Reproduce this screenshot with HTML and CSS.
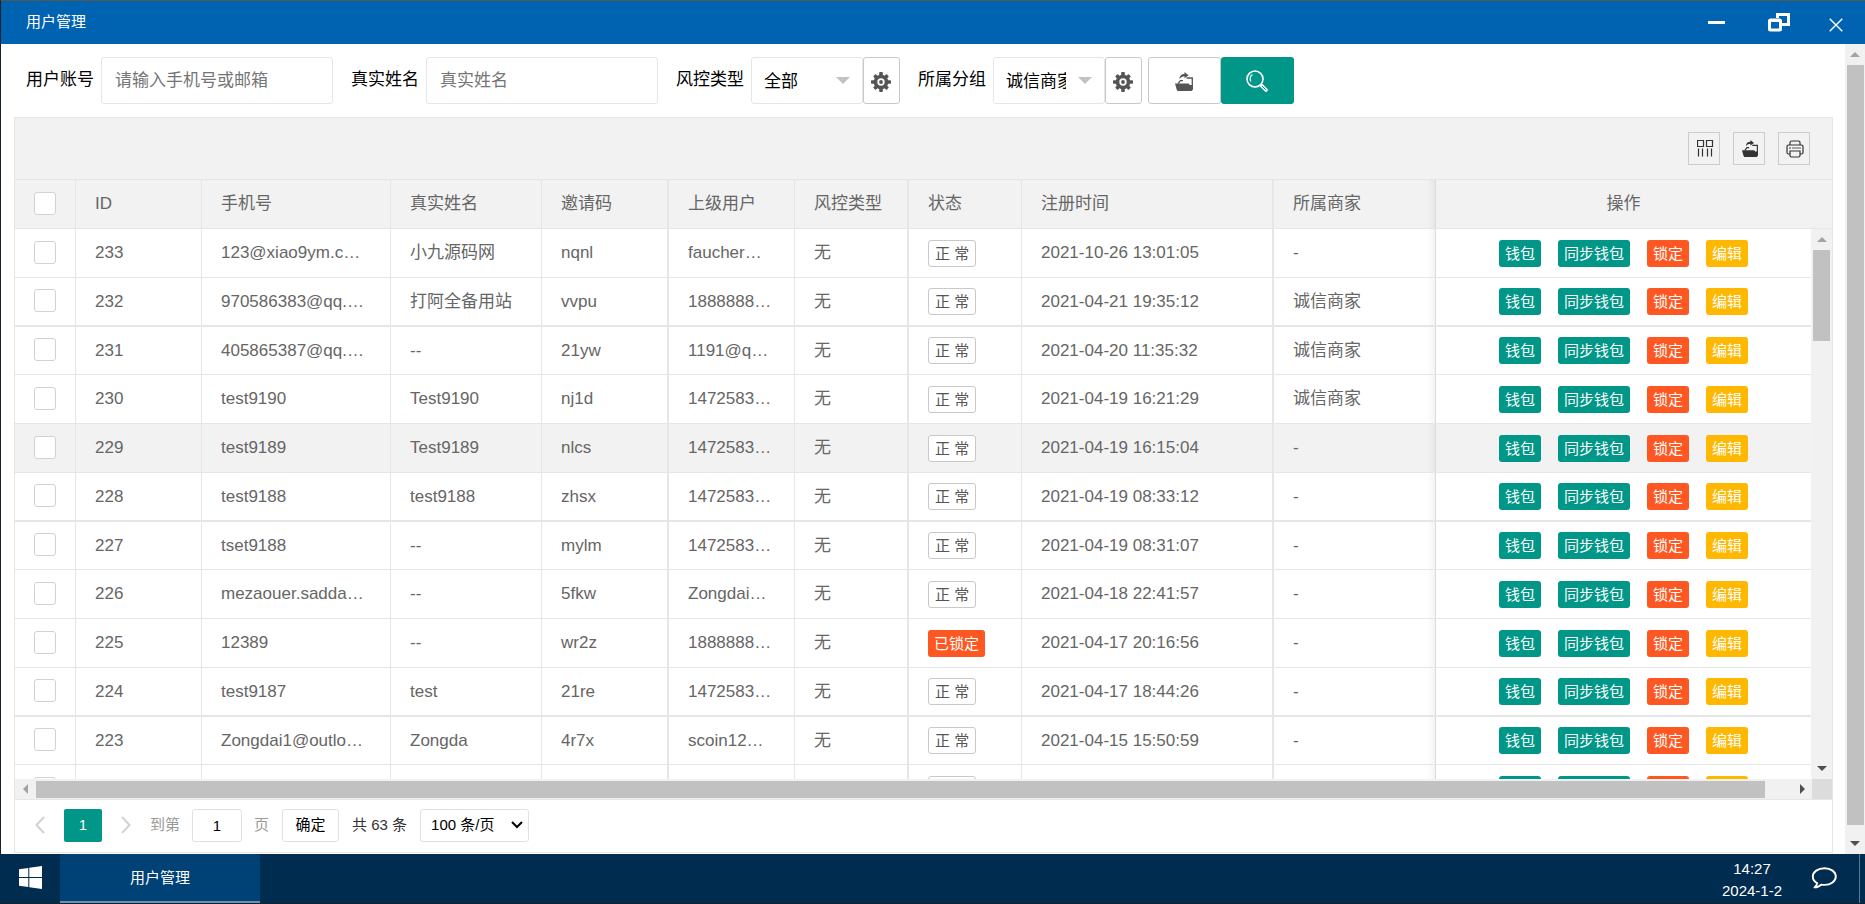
FILE: index.html
```html
<!DOCTYPE html>
<html lang="zh-CN">
<head>
<meta charset="utf-8">
<title>用户管理</title>
<link rel="stylesheet" href="styles.css">
</head>
<body>
<svg class="sprite" aria-hidden="true">
  <symbol id="i-gear" viewBox="0 0 20 20">
    <g fill="currentColor"><rect x="8.200" y="0" width="3.600" height="20" rx=".8"/><rect x="0" y="8.200" width="20" height="3.600" rx=".8"/><rect x="8.200" y="0.500" width="3.600" height="19" rx=".8" transform="rotate(45 10 10)"/><rect x="8.200" y="0.500" width="3.600" height="19" rx=".8" transform="rotate(-45 10 10)"/><circle cx="10" cy="10" r="7.300"/></g>
    <circle cx="10" cy="10" r="3.700" fill="#fff"/><circle cx="10" cy="10" r="1.900" fill="currentColor"/>
  </symbol>
  <symbol id="i-export" viewBox="0 0 18 19">
    <path fill="currentColor" d="M0 11.500h13.500l1.500 1.500h3v4.500L16.500 19H2.500L1.500 17z"/>
    <path fill="none" stroke="currentColor" stroke-width="1.300" d="M3.200 11.500 5.500 8.600H8M11.500 6h5.800v8"/>
    <path fill="currentColor" d="M4.500 7C4.500 3.500 6.500 2 9.500 2V0l4 3.200-4 3V4.200C7.500 4.200 6 5 4.500 7z"/>
  </symbol>
</svg>

<main class="window">
  <header class="titlebar">
    <h1 class="titlebar-text">用户管理</h1>
    <button class="win-btn" aria-label="最小化"><svg width="18" height="20" viewBox="0 0 18 20"><path d="M0 10.500h17" stroke="#fff" stroke-width="3"/></svg></button>
    <button class="win-btn win-btn-mid" aria-label="还原"><svg width="22" height="20" viewBox="0 0 22 20"><g fill="none" stroke="#fff"><path stroke-width="3" d="M9.500 6V2.500h11v10H14"/><rect x="1.500" y="8" width="11" height="10" stroke-width="3" rx="1"/><path stroke-width="3" d="M1 8.500h12"/></g></svg></button>
    <button class="win-btn" aria-label="关闭"><svg width="14" height="14" viewBox="0 0 14 14"><path d="M.7.7l12.600 12.600M13.300.7.7 13.300" stroke="#fff" stroke-width="1.400"/></svg></button>
  </header>

  <div class="window-body">
    <div class="page">
      <form class="search">
        <div class="field">
          <label for="account">用户账号</label>
          <input id="account" class="control text" type="text" placeholder="请输入手机号或邮箱">
        </div>
        <div class="field">
          <label for="realname">真实姓名</label>
          <input id="realname" class="control text" type="text" placeholder="真实姓名">
        </div>
        <div class="field">
          <label for="risk">风控类型</label>
          <select id="risk" class="control pick"><option>全部</option></select>
          <button type="button" class="control gear" aria-label="风控类型设置"><svg width="20" height="20"><use href="#i-gear"/></svg></button>
        </div>
        <div class="field">
          <label for="group">所属分组</label>
          <select id="group" class="control pick"><option>诚信商家</option></select>
          <button type="button" class="control gear" aria-label="所属分组设置"><svg width="20" height="20"><use href="#i-gear"/></svg></button>
        </div>
        <div class="actions">
          <button type="button" class="control action" aria-label="导出"><svg width="18" height="19"><use href="#i-export"/></svg></button>
          <button type="submit" class="control action action-search" aria-label="搜索"><svg width="22" height="22" viewBox="0 0 22 22" fill="none" stroke="#fff"><circle cx="9" cy="9" r="8" stroke-width="1.600"/><path d="M5 11.500A5 5 0 0 1 6.500 4.500" stroke-width="1.200"/><path d="M15.500 15.500l4.500 4.500" stroke-width="3.600" stroke-linecap="round"/><path d="M16 16l3.800 3.800" stroke="#009688" stroke-width="1"/></svg></button>
        </div>
      </form>

      <section class="grid">
        <div class="tools">
          <button class="tool" aria-label="筛选列"><svg width="17" height="17" viewBox="0 0 17 17" fill="none" stroke="currentColor"><path d="M.5.500h6v6h-6zM9.500.500h6v6h-6zM1.500 8.500v8M5.500 8.500v8M10.500 8.500v8M14.500 8.500v8" stroke-width="1.200"/></svg></button>
          <button class="tool" aria-label="导出"><svg width="16" height="17"><use href="#i-export"/></svg></button>
          <button class="tool" aria-label="打印"><svg width="18" height="18" viewBox="0 0 18 18" fill="none" stroke="currentColor" stroke-width="1.200"><path d="M4 5V2.500Q4 1 5.500 1h7Q14 1 14 2.500V5M4 14H2.500Q1 14 1 12.500v-6Q1 5 2.500 5h13Q17 5 17 6.500v6q0 1.500-1.500 1.500H14M4 11h10v4.500q0 1.500-1.500 1.500h-7Q4 17 4 15.500zM3 8h2"/><path stroke-width=".8" d="M6 8h9"/></svg></button>
        </div>

        <table class="table table-head">
          <colgroup><col class="c-check"><col class="c-id"><col class="c-phone"><col class="c-name"><col class="c-code"><col class="c-parent"><col class="c-risk"><col class="c-state"><col class="c-time"><col><col class="c-ops-head"></colgroup>
          <thead>
            <tr>
              <th class="check"><input type="checkbox" aria-label="全选"></th>
              <th>ID</th><th>手机号</th><th>真实姓名</th><th class="thick">邀请码</th><th>上级用户</th><th class="thick">风控类型</th><th>状态</th><th class="thick">注册时间</th><th>所属商家</th><th class="ops">操作</th>
            </tr>
          </thead>
        </table>

        <div class="viewport">
          <div class="rows">
            <table class="table">
              <colgroup><col class="c-check"><col class="c-id"><col class="c-phone"><col class="c-name"><col class="c-code"><col class="c-parent"><col class="c-risk"><col class="c-state"><col class="c-time"><col><col class="c-ops"></colgroup>
              <tbody id="users"></tbody>
            </table>
          </div>
          <div class="vbar" aria-hidden="true"><i class="arrow up"></i><i class="thumb thumb-rows"></i><i class="arrow down"></i></div>
        </div>

        <div class="hbar" aria-hidden="true"><i class="arrow left"></i><div class="htrack"><i class="thumb"></i></div><i class="arrow right"></i><i class="corner"></i></div>

        <nav class="pager" aria-label="分页">
          <button class="turn" aria-label="上一页"><svg width="10" height="18" viewBox="0 0 10 18"><path d="M9 1 1.500 9 9 17" fill="none" stroke="currentColor" stroke-width="2"/></svg></button>
          <button class="current" aria-current="page">1</button>
          <button class="turn" aria-label="下一页"><svg width="10" height="18" viewBox="0 0 10 18"><path d="M1 1l7.500 8L1 17" fill="none" stroke="currentColor" stroke-width="2"/></svg></button>
          <label class="muted" for="goto">到第</label>
          <input id="goto" class="goto" type="text" value="1">
          <span class="muted unit">页</span>
          <button class="confirm">确定</button>
          <span class="total">共 63 条</span>
          <select class="size" aria-label="每页条数"><option>100 条/页</option></select>
        </nav>
      </section>
    </div>
    <div class="vbar vbar-page" aria-hidden="true"><i class="arrow up"></i><i class="thumb"></i><i class="arrow down"></i></div>
  </div>
</main>

<footer class="taskbar">
  <button class="start" aria-label="开始"><svg width="23" height="23" viewBox="0 0 23 23" fill="#fff"><path d="M0 3.200 9.300 2v9H0zM10.300 1.800 23 0v11H10.300zM0 12h9.300v9L0 19.800zM10.300 12H23v11l-12.700-1.800z"/></svg></button>
  <button class="task">用户管理</button>
  <div class="clock"><time>14:27</time><time>2024-1-2</time></div>
  <button class="chat" aria-label="消息"><svg width="26" height="22" viewBox="0 0 26 22"><path d="M13.500 1.200C7 1.200 1.800 4.900 1.800 9.500c0 2.900 1.700 5.200 4.400 6.600-.3 1.900-1.500 3.300-2.700 4.300 2.900 0 5-.9 6.700-2.800 1 .2 2.200.3 3.300.3 6.400 0 11.300-3.600 11.300-8.400 0-4.600-4.900-8.300-11.300-8.300z" fill="none" stroke="#fff" stroke-width="1.900" stroke-linejoin="round"/></svg></button>
</footer>
<script src="users.js"></script>
</body>
</html>
```

FILE: users.js
```js
const users = [
  ["233", "123@xiao9ym.c…", "小九源码网", "nqnl", "faucher…", "2021-10-26 13:01:05", "-"],
  ["232", "970586383@qq.…", "打阿全备用站", "vvpu", "1888888…", "2021-04-21 19:35:12", "诚信商家"],
  ["231", "405865387@qq.…", "--", "21yw", "1191@q…", "2021-04-20 11:35:32", "诚信商家"],
  ["230", "test9190", "Test9190", "nj1d", "1472583…", "2021-04-19 16:21:29", "诚信商家"],
  ["229", "test9189", "Test9189", "nlcs", "1472583…", "2021-04-19 16:15:04", "-"],
  ["228", "test9188", "test9188", "zhsx", "1472583…", "2021-04-19 08:33:12", "-"],
  ["227", "tset9188", "--", "mylm", "1472583…", "2021-04-19 08:31:07", "-"],
  ["226", "mezaouer.sadda…", "--", "5fkw", "Zongdai…", "2021-04-18 22:41:57", "-"],
  ["225", "12389", "--", "wr2z", "1888888…", "2021-04-17 20:16:56", "-"],
  ["224", "test9187", "test", "21re", "1472583…", "2021-04-17 18:44:26", "-"],
  ["223", "Zongdai1@outlo…", "Zongda", "4r7x", "scoin12…", "2021-04-15 15:50:59", "-"],
  ["", "", "", "", "", "", ""]
];
const locked = "225";
const hovered = "229";

document.getElementById("users").innerHTML = users.map(([id, phone, name, code, parent, time, shop]) => `
  <tr class="${id === hovered ? "hover" : ""}">
    <td class="check"><input type="checkbox" aria-label="选择 ${id}"></td>
    <td>${id}</td><td>${phone}</td><td>${name}</td><td class="thick">${code}</td><td>${parent}</td>
    <td class="thick">${id ? "无" : ""}</td>
    <td>${id === locked ? '<button class="tag red">已锁定</button>' : '<button class="tag plain">正 常</button>'}</td>
    <td class="thick">${time}</td><td>${shop}</td>
    <td class="ops"><div class="ops-list">
      <button class="tag green">钱包</button><button class="tag green">同步钱包</button><button class="tag red">锁定</button><button class="tag yellow">编辑</button>
    </div></td>
  </tr>`).join("");
```

FILE: styles.css
```css
* { box-sizing: border-box; }

body {
  margin: 0;
  height: 100vh;
  display: flex;
  flex-direction: column;
  overflow: hidden;
  background: #15202b;
  color: #000;
  font: 17px/24px "Liberation Sans", "Noto Sans CJK SC", sans-serif;
}

button, input, select { font: inherit; margin: 0; }
button { padding: 0; border: 0; background: none; color: inherit; }
svg { display: block; }
.sprite { position: absolute; width: 0; height: 0; }

/* window frame */
.window {
  flex: 1;
  min-height: 0;
  display: flex;
  flex-direction: column;
  border-top: 1px solid #55574c;
  border-left: 1px solid #15202b;
}
.titlebar {
  height: 43px;
  display: flex;
  align-items: center;
  padding: 0 22px 2px 25px;
  background: #0063b1;
  color: #fff;
}
.titlebar-text { margin: 0; margin-right: auto; font-size: 15px; font-weight: 400; }
.win-btn { display: flex; align-items: center; height: 40px; }
.win-btn-mid { margin: 0 39px 0 42px; }
.win-btn:last-child { padding-top: 6px; }

.window-body { flex: 1; min-height: 0; display: flex; background: #fff; }
.page {
  flex: 1;
  min-width: 0;
  display: flex;
  flex-direction: column;
  padding: 13px 12px 1px 13px;
}

/* search bar */
.search { display: flex; padding-left: 12px; margin-bottom: 13px; }
.field { display: flex; align-items: center; margin-right: 18px; }
.field label { width: 75px; padding-bottom: 2px; white-space: nowrap; }
.control {
  height: 47px;
  border: 1px solid #e6e6e6;
  border-radius: 3px;
  background: #fff;
  outline: 0;
}
.text { width: 232px; padding: 0 13px; }
.text::placeholder { color: #757575; opacity: 1; }
.pick {
  width: 112px;
  padding: 2px 38px 0 12px;
  appearance: none;
  color: #000;
  background: #fff url("data:image/svg+xml,%3Csvg xmlns='http://www.w3.org/2000/svg' width='14' height='7'%3E%3Cpath d='M0 0h14L7 7z' fill='%23c2c2c2'/%3E%3C/svg%3E") no-repeat right 12px center;
}
.gear, .action {
  display: flex;
  align-items: center;
  justify-content: center;
  border-color: #c9c9c9;
  color: #555;
}
.gear { width: 37px; padding: 2px 2px 0 0; }
.actions { display: flex; margin-left: -12px; }
.action { width: 73px; padding: 2px 2px 0 0; }
.action-search { border: 0; background: #009688; padding: 0 2px 0 0; }

/* data grid */
.grid {
  flex: 1;
  min-height: 0;
  display: flex;
  flex-direction: column;
  border: 1px solid #e6e6e6;
  color: #666;
}
.tools {
  height: 62px;
  display: flex;
  align-items: center;
  justify-content: flex-end;
  gap: 13px;
  padding-right: 22px;
  background: #f2f2f2;
  border-bottom: 1px solid #e6e6e6;
}
.tool {
  width: 32px;
  height: 33px;
  display: flex;
  align-items: center;
  justify-content: center;
  padding-left: 2px;
  border: 1px solid #ccc;
  color: #333;
}

.table { width: 100%; table-layout: fixed; border-collapse: separate; border-spacing: 0; }
.c-check { width: 61px; }
.c-id, .c-parent { width: 126px; }
.c-phone { width: 189px; }
.c-name { width: 151px; }
.c-code { width: 127px; }
.c-risk { width: 114px; }
.c-state { width: 113px; }
.c-time { width: 252px; }
.c-ops { width: 376px; }
.c-ops-head { width: 397px; }

th, td {
  height: 49px;
  padding: 0 0 0 19px;
  border-right: 1px solid #e6e6e6;
  border-bottom: 1px solid #e6e6e6;
  font-weight: 400;
  text-align: left;
  white-space: nowrap;
}
.thick { border-right-width: 2px; }
.table-head { background: #f2f2f2; }
tbody tr:nth-child(4n+2) td { border-bottom-width: 2px; }
tbody tr:nth-child(4n+3) td { height: 48px; }
.hover { background: #f2f2f2; }

.check input {
  display: block;
  width: 22px;
  height: 23px;
  margin-bottom: 2px;
  appearance: none;
  background: #fff;
  border: 1px solid #d2d2d2;
  border-radius: 3px;
}

.ops { position: relative; padding: 0; text-align: center; border-left: 1px solid #e6e6e6; border-right: 0; }
th.ops { padding-right: 21px; }
th:nth-last-child(2), td:nth-last-child(2) { border-right: 0; }
.ops::before {
  content: "";
  position: absolute;
  top: 0;
  bottom: 0;
  right: 100%;
  width: 9px;
  background: linear-gradient(to left, rgba(0, 0, 0, .05), rgba(0, 0, 0, 0));
}
.ops-list { display: flex; justify-content: center; gap: 17px; }

.tag {
  display: block;
  height: 27px;
  padding: 0 6px;
  border-radius: 3px;
  color: #fff;
  font-size: 15px;
  line-height: 27px;
}
.plain { border: 1px solid #c9c9c9; line-height: 25px; color: #555; background: #fff; }
.green { background: #009688; }
.red { background: #ff5722; }
.yellow { background: #ffb800; }

.viewport { flex: 1; min-height: 0; display: flex; }
.rows { flex: 1; min-width: 0; overflow: hidden; }

/* scrollbars */
.vbar {
  width: 21px;
  display: flex;
  flex-direction: column;
  align-items: center;
  background: #f1f1f1;
}
.vbar .thumb { flex: 1; width: 17px; }
.vbar .thumb-rows { flex: none; height: 91px; margin-bottom: auto; }
.vbar-page { width: 20px; }
.thumb { background: #c1c1c1; }
.arrow { flex: none; width: 20px; height: 21px; display: grid; place-items: center; }
.vbar-page .arrow.down { height: 29px; padding-top: 8px; }
.arrow::before { content: ""; border: 5px solid transparent; }
.up::before { border-top: 0; border-bottom-color: #a3a3a3; }
.down::before { border-bottom: 0; border-top-color: #505050; }
.left::before { border-left: 0; border-right-color: #a3a3a3; }
.right::before { border-right: 0; border-left-color: #505050; }

.hbar { height: 21px; display: flex; align-items: center; background: #f1f1f1; border-bottom: 1px solid #e6e6e6; }
.htrack { flex: 1; display: flex; padding: 0 27px 0 1px; }
.htrack .thumb { flex: 1; height: 17px; }
.corner { width: 20px; height: 20px; background: #dcdcdc; }

/* pagination */
.pager { height: 52px; display: flex; align-items: center; padding: 0 0 2px 20px; font-size: 15px; color: #333; }
.turn { color: #d2d2d2; }
.current { width: 38px; height: 33px; margin: 0 19px; border-radius: 2px; background: #009688; color: #fff; }
.muted { margin-left: 19px; color: #999; }
.goto, .confirm, .size { height: 33px; border: 1px solid #e2e2e2; border-radius: 3px; background: #fff; color: #000; }
.goto { width: 50px; margin-left: 12px; padding: 0; text-align: center; }
.unit { margin-left: 12px; }
.confirm { width: 57px; margin: 0 13px; }
.size {
  width: 109px;
  margin-left: 13px;
  padding: 0 8px 0 10px;
  appearance: none;
  background: #fff url("data:image/svg+xml,%3Csvg xmlns='http://www.w3.org/2000/svg' width='12' height='8'%3E%3Cpath d='M1 1l5 5 5-5' fill='none' stroke='%23000' stroke-width='2'/%3E%3C/svg%3E") no-repeat right 5px center;
}

/* taskbar */
.taskbar {
  height: 50px;
  display: flex;
  border-bottom: 1px solid #15202b;
  padding-right: 5px;
  background: #002c4f;
  color: #fff;
  font-size: 15px;
}
.start { width: 60px; padding: 0 0 2px 19px; }
.task { width: 200px; background: #004275; border-bottom: 2px solid #6b8fb0; }
.clock { margin-left: auto; display: flex; flex-direction: column; align-items: center; padding-top: 4px; line-height: 22px; }
.chat { width: 78px; padding: 0 0 2px 29px; border-right: 1px solid #5c7a92; }
```
